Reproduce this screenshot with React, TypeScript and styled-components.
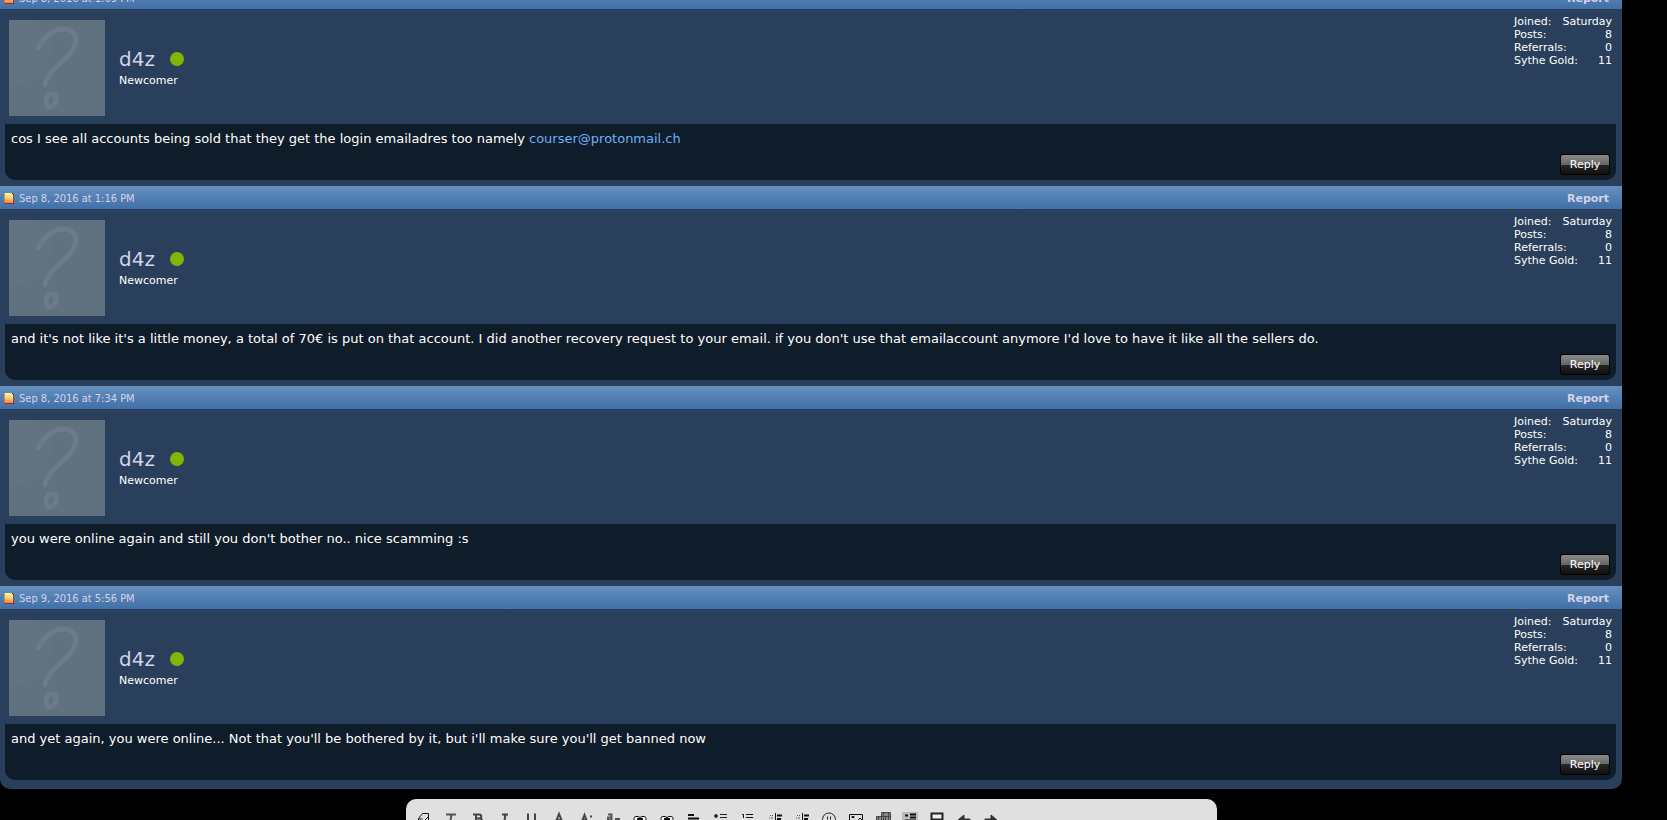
import React from 'react';
import styled, { createGlobalStyle } from 'styled-components';

const GlobalStyle = createGlobalStyle`
  * { box-sizing: border-box; }
  body {
    margin: 0;
    background: #000;
    font-family: Verdana, 'DejaVu Sans', sans-serif;
    font-size: 13px;
    color: #fff;
  }
`;

const Viewport = styled.div`
  height: 100vh;
  overflow: hidden;
`;

const Page = styled.div`
  margin-top: -14px;
  padding-right: 45px;
`;

const Thread = styled.main`
  padding-bottom: 3px;
  background: #293f5b;
  border-radius: 0 0 10px 10px;
`;

const Post = styled.article`
  padding-bottom: 6px;
`;

const PostBar = styled.header`
  display: flex;
  align-items: center;
  gap: 5px;
  height: 23px;
  padding: 1px 13px 0 4px;
  background: linear-gradient(#6590be, #4170a8);
  color: #d2d3ec;
  font-size: 11px;
`;

const DateLink = styled.a`
  flex: 1;
  color: inherit;
  font-family: Tahoma, 'DejaVu Sans Condensed', sans-serif;
  text-decoration: none;
`;

const ReportLink = styled.a`
  color: inherit;
  font-weight: bold;
  text-decoration: none;
`;

const UserInfo = styled.section`
  display: flex;
  align-items: flex-start;
  height: 115px;
  padding: 11px 10px 0 9px;
`;

const Identity = styled.div`
  flex: 1;
  padding: 25px 0 0 14px;
`;

const NameRow = styled.div`
  display: flex;
  align-items: center;
  gap: 15px;
  height: 28px;
`;

const UserName = styled.a`
  color: #d2d3ec;
  font-size: 20px;
  text-decoration: none;
`;

const OnlineDot = styled.span`
  width: 14px;
  height: 14px;
  border-radius: 50%;
  background: #80b600;
`;

const Rank = styled.div`
  font-size: 11px;
  line-height: 16px;
`;

const Stats = styled.dl`
  width: 98px;
  margin: -5px 0 0;
  font-size: 11px;
  line-height: 13px;
  white-space: nowrap;
`;

const Stat = styled.div`
  display: flex;
  justify-content: space-between;

  dd { margin: 0; }
`;

const Message = styled.section`
  display: flex;
  flex-direction: column;
  justify-content: space-between;
  min-height: 56px;
  margin: 0 6px 0 5px;
  padding: 5px 6px;
  background: #0f1c2a;
  border-radius: 0 0 10px 10px;
`;

const MessageText = styled.p`
  margin: 0;
  line-height: 20px;
`;

const MailLink = styled.a`
  color: #6eb1f5;
  text-decoration: none;
`;

const ReplyButton = styled.button`
  align-self: flex-end;
  min-width: 50px;
  height: 21px;
  padding: 0 8px;
  border: 1px solid #000;
  border-radius: 3px;
  background: linear-gradient(#8a8a8a, #666 50%, #262626 50%, #111);
  color: #fff;
  font: 11px/18px Verdana, 'DejaVu Sans', sans-serif;
`;

const Editor = styled.div`
  display: flex;
  width: 50%;
  margin: 10px auto 0;
  padding: 12px 5px;
  background: #e0e0e0;
  border-radius: 10px;
`;

const Tool = styled.button`
  flex: none;
  display: flex;
  justify-content: center;
  width: 27px;
  height: 24px;
  padding: 0;
  border: 0;
  background: none;
`;

const PageIcon = () => (
  <svg width="10" height="11" viewBox="0 0 10 11" aria-hidden="true">
    <defs>
      <linearGradient id="sheet" x1="0" y1="0" x2="0" y2="1">
        <stop offset="0" stopColor="#fffb9e" />
        <stop offset=".5" stopColor="#ffc873" />
        <stop offset="1" stopColor="#ff6a3e" />
      </linearGradient>
    </defs>
    <path d="M0 0H8L10 2V11H0Z" fill="url(#sheet)" />
    <path d="M0 10.500H10M9.500 2V11" stroke="#70301f" fill="none" opacity=".8" />
    <path d="M.5 0V11" stroke="#b0603a" fill="none" opacity=".6" />
    <path d="M8 0h1v1h1v1H9V1H8z" fill="#222" />
  </svg>
);

const Avatar = () => (
  <svg width="96" height="96" viewBox="0 0 96 96" role="img" aria-label="Avatar">
    <path fill="#607180" d="M0 0H96V96H0Z" />
    <path fill="#637381" d="M26 0 46 29 23 60 0 70V0Z" />
    <g fill="none" stroke="#6b7b8a" strokeLinecap="round" strokeWidth="5">
      <path d="M29 28C36 14 47 8 57 9c10 2 12 11 7 20C56 43 38 50 36 65" />
      <path d="M39 75c-4 5-2 13 3 12 6-2 8-12 1-13" />
    </g>
  </svg>
);

const ToolIcon = ({ children }: { children: React.ReactNode }) => (
  <svg width="16" height="16" viewBox="0 0 16 16" fill="none" stroke="#222" aria-hidden="true">
    {children}
  </svg>
);

const ChainIcon = () => (
  <>
    <rect x="2" y="5.500" width="6" height="6" rx="2" fill="#fff" stroke="#111" />
    <rect x="8" y="5.500" width="6" height="6" rx="2" fill="#fff" stroke="#111" />
    <path d="M5 8h6" stroke="#111" strokeWidth="2" />
  </>
);

const IndentIcon = () => (
  <>
    <path d="M8.500 2v12" stroke="#111" />
    <path d="M10 4.500h5M10 8h4" stroke="#111" strokeWidth="2" />
    <path d="M3 4.500h1m1 0h1M2 7h1m1 0h2" stroke="#555" />
  </>
);

const tools: { name: string; icon: React.ReactNode }[] = [
  { name: 'Remove formatting', icon: <path d="M2.500 13V7.500l4-5h6v8M2.500 8h4M9 9l3-3" stroke="#111" /> },
  { name: 'Template', icon: <path d="M3 3.500h10M8.500 4 6.500 14" stroke="#555" strokeWidth="2" /> },
  { name: 'Bold', icon: <path d="M6 3v10M3 3.500h6c3 0 3 4 0 4H6h4c3 0 3 5 0 5H3" stroke="#444" strokeWidth="2" /> },
  { name: 'Italic', icon: <path d="M5 3.500h6M4 13h6M8.500 3 7 13" stroke="#444" strokeWidth="2" /> },
  { name: 'Underline', icon: <path d="M4 2.500v6c0 4 7 4 7 0v-6M3 14h9" stroke="#444" strokeWidth="2" /> },
  { name: 'Text color', icon: <path d="m4 13 4-10 4 10M5 9h6" stroke="#444" strokeWidth="2" /> },
  { name: 'Font size', icon: <path d="m3 13 3.500-9L10 13M4 9h5M12 5.500h2" stroke="#444" strokeWidth="2" /> },
  { name: 'Font family', icon: <path d="M3 3.500h3.500V9H3V6.500h3M10 8h4v5" stroke="#555" strokeWidth="2" /> },
  { name: 'Link', icon: <ChainIcon /> },
  { name: 'Unlink', icon: <ChainIcon /> },
  { name: 'Alignment', icon: <path d="M2 4h6M2 7.500h11M2 11h7" stroke="#111" strokeWidth="2" /> },
  { name: 'Bulleted list', icon: <><circle cx="3" cy="5" r="1.500" fill="#333" stroke="#333" /><path d="M7 3.500h7M7 6.500h7M7 11.500h7" /></> },
  { name: 'Numbered list', icon: <path d="M2 3.500h1.500V7M6 3.500h7M6 6.500h7M6 11.500h7" stroke="#111" /> },
  { name: 'Outdent', icon: <IndentIcon /> },
  { name: 'Indent', icon: <IndentIcon /> },
  { name: 'Smilies', icon: <><circle cx="8" cy="8.500" r="6.500" /><path d="M6.500 5.500v3m3-3v3M4 11c2 2 6 2 8 0" /></> },
  { name: 'Image', icon: <path d="M1.500 3.500h13v10h-13zM4 5.500h2v1H4zM2 12l4-3 3 2 3-4 2 2" stroke="#111" /> },
  { name: 'Media', icon: <><path d="M6.500 1.500h9v9h-9zM1.500 5.500h9v9h-9z" fill="#888" stroke="#444" /><path d="M8.500 1v9m5-9v9M6 5.500h9M3.500 5v9m5-9v9" stroke="#444" /></> },
  { name: 'Insert quote', icon: <><path d="M0 1h16v14H0z" fill="#bbb" stroke="none" /><path d="M3 4.500h3M8 3.500h6M8 6.500h6M3 9.500h11M3 12.500h11" stroke="#111" strokeWidth="2" /></> },
  { name: 'Save draft', icon: <path d="M2.500 2.500h11v11h-11zM2 8.500h12" stroke="#222" strokeWidth="2" fill="#eee" /> },
  { name: 'Undo', icon: <path d="m8 4-6 5 6 4v-3h6V8H8z" fill="#333" stroke="#333" /> },
  { name: 'Redo', icon: <path d="m8 4 6 5-6 4v-3H2V8h6z" fill="#333" stroke="#333" /> },
];

const posts: { date: string; text: string; mail?: string }[] = [
  { date: 'Sep 8, 2016 at 1:09 PM', text: 'cos I see all accounts being sold that they get the login emailadres too namely ', mail: 'courser@protonmail.ch' },
  { date: 'Sep 8, 2016 at 1:16 PM', text: "and it's not like it's a little money, a total of 70€ is put on that account. I did another recovery request to your email. if you don't use that emailaccount anymore I'd love to have it like all the sellers do." },
  { date: 'Sep 8, 2016 at 7:34 PM', text: "you were online again and still you don't bother no.. nice scamming :s" },
  { date: 'Sep 9, 2016 at 5:56 PM', text: "and yet again, you were online... Not that you'll be bothered by it, but i'll make sure you'll get banned now" },
];

const stats = [
  ['Joined:', 'Saturday'],
  ['Posts:', '8'],
  ['Referrals:', '0'],
  ['Sythe Gold:', '11'],
];

export default function App() {
  return (
    <Viewport>
      <GlobalStyle />
      <Page>
        <Thread>
          {posts.map(post => (
            <Post key={post.date}>
              <PostBar>
                <PageIcon />
                <DateLink href="#post">{post.date}</DateLink>
                <ReportLink href="#report">Report</ReportLink>
              </PostBar>
              <UserInfo>
                <Avatar />
                <Identity>
                  <NameRow>
                    <UserName href="#member">d4z</UserName>
                    <OnlineDot />
                  </NameRow>
                  <Rank>Newcomer</Rank>
                </Identity>
                <Stats>
                  {stats.map(([label, value]) => (
                    <Stat key={label}>
                      <dt>{label}</dt>
                      <dd>{value}</dd>
                    </Stat>
                  ))}
                </Stats>
              </UserInfo>
              <Message>
                <MessageText>
                  {post.text}
                  {post.mail && <MailLink href={`mailto:${post.mail}`}>{post.mail}</MailLink>}
                </MessageText>
                <ReplyButton type="button">Reply</ReplyButton>
              </Message>
            </Post>
          ))}
        </Thread>
        <Editor>
          {tools.map(tool => (
            <Tool key={tool.name} type="button" aria-label={tool.name}>
              <ToolIcon>{tool.icon}</ToolIcon>
            </Tool>
          ))}
        </Editor>
      </Page>
    </Viewport>
  );
}
